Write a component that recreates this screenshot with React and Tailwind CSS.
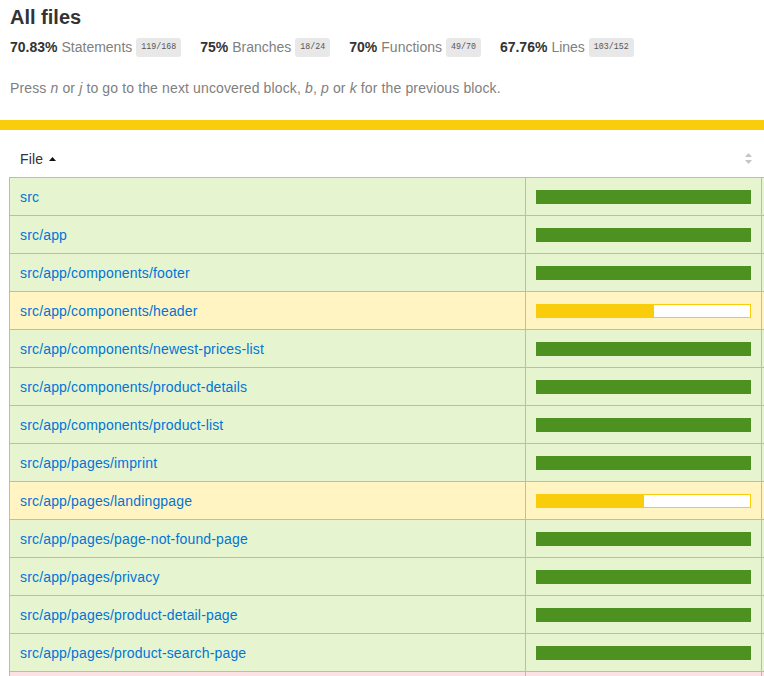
import React from "react";

const stats = [
  { pct: "70.83%", label: "Statements", frac: "119/168" },
  { pct: "75%", label: "Branches", frac: "18/24" },
  { pct: "70%", label: "Functions", frac: "49/70" },
  { pct: "67.76%", label: "Lines", frac: "103/152" },
];

const rows = [
  { name: "src", level: "high", pct: 100 },
  { name: "src/app", level: "high", pct: 100 },
  { name: "src/app/components/footer", level: "high", pct: 100 },
  { name: "src/app/components/header", level: "medium", pct: 55 },
  { name: "src/app/components/newest-prices-list", level: "high", pct: 100 },
  { name: "src/app/components/product-details", level: "high", pct: 100 },
  { name: "src/app/components/product-list", level: "high", pct: 100 },
  { name: "src/app/pages/imprint", level: "high", pct: 100 },
  { name: "src/app/pages/landingpage", level: "medium", pct: 50 },
  { name: "src/app/pages/page-not-found-page", level: "high", pct: 100 },
  { name: "src/app/pages/privacy", level: "high", pct: 100 },
  { name: "src/app/pages/product-detail-page", level: "high", pct: 100 },
  { name: "src/app/pages/product-search-page", level: "high", pct: 100 },
  { name: "src/app/services", level: "low", pct: 20 },
];

const rowBg = {
  high: "bg-[#e6f5d0]",
  medium: "bg-[#fff4c2]",
  low: "bg-[#fce1e5]",
};

const barBorder = {
  high: "border-[#4d9221]",
  medium: "border-[#f9cd0b]",
  low: "border-[#c21f39]",
};

const barFill = {
  high: "bg-[#4d9221]",
  medium: "bg-[#f9cd0b]",
  low: "bg-[#c21f39]",
};

function CoverBar({ level, pct }) {
  return (
    <div className={`w-[215px] h-[14px] border bg-white ${barBorder[level]}`}>
      <div className={`h-full ${barFill[level]}`} style={{ width: `${pct}%` }} />
    </div>
  );
}

function SortBoth() {
  return (
    <svg width="7" height="11" viewBox="0 0 7 11">
      <polygon points="3.5,0 7,4 0,4" fill="#c4c4c4" />
      <polygon points="0,7 7,7 3.5,11" fill="#c4c4c4" />
    </svg>
  );
}

function App() {
  return (
    <div className="w-[764px] h-[676px] overflow-hidden bg-white text-[14px] text-[#333] font-['Liberation_Sans',Arial,sans-serif]">
      <div className="px-[10px] pt-[7px]">
        <h1 className="text-[20px] leading-[20px] font-bold">All files</h1>
        <div className="mt-[10px] h-[20px] flex items-center whitespace-nowrap">
          {stats.map((s) => (
            <div key={s.label} className="flex items-center mr-[19px]">
              <span className="font-bold">{s.pct}</span>
              <span className="text-[#808080] ml-[4px]">{s.label}</span>
              <span className="ml-[4px] h-[19px] px-[5px] flex items-center rounded-[3px] bg-[#e8e8e8] text-[#555] text-[8.3px] font-['Liberation_Mono',monospace]">
                {s.frac}
              </span>
            </div>
          ))}
        </div>
        <p className="mt-[21px] leading-[20px] text-[#808080] tracking-[0.13px] whitespace-nowrap">
          Press <em>n</em> or <em>j</em> to go to the next uncovered block, <em>b</em>, <em>p</em> or <em>k</em> for the previous block.
        </p>
      </div>

      <div className="mt-[22px] h-[10px] bg-[#f9cd0b]" />

      <div className="pt-[10px] pl-[9px]">
        <div className="flex h-[37px] items-center whitespace-nowrap">
          <div className="w-[516px] pl-[11px] flex items-center">
            <span className="leading-[20px] tracking-[0.15px]">File</span>
            <svg className="ml-[6px]" width="7" height="4" viewBox="0 0 7 4">
              <polygon points="3.5,0 7,4 0,4" fill="#111" />
            </svg>
          </div>
          <div className="w-[237px] flex justify-end pr-[10px]">
            <SortBoth />
          </div>
        </div>

        <div className="border-t border-[#bbb] w-[800px]">
          {rows.map((r) => (
            <div key={r.name} className={`flex h-[38px] border-l border-b border-[#bbb] ${rowBg[r.level]}`}>
              <div className="w-[516px] shrink-0 border-r border-[#bbb] pl-[10px] flex items-center">
                <a href="#" className="text-[#0074d9] leading-[20px] tracking-[0.16px]">{r.name}</a>
              </div>
              <div className="w-[236px] shrink-0 border-r border-[#bbb] pl-[10px] flex items-center">
                <CoverBar level={r.level} pct={r.pct} />
              </div>
              <div className="flex-1" />
            </div>
          ))}
        </div>
      </div>
    </div>
  );
}

export default App;
